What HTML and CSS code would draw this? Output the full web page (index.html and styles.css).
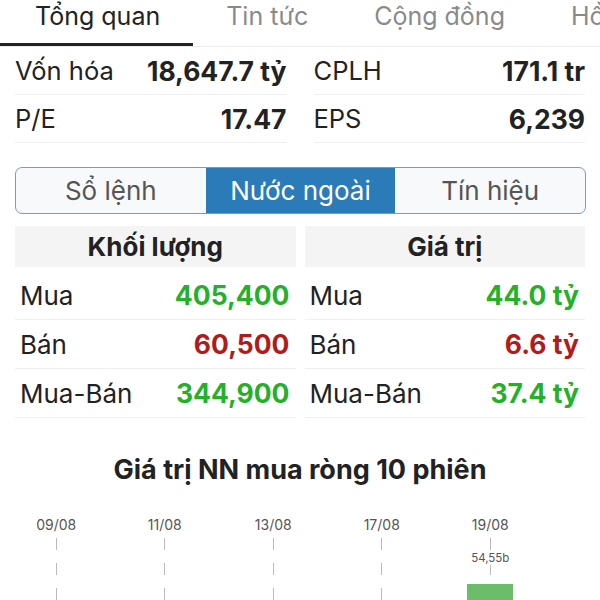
FILE: index.html
```html
<!DOCTYPE html>
<html lang="vi">
  <head>
    <meta charset="utf-8" />
    <meta name="viewport" content="width=device-width, initial-scale=1.0" />
    <title>Tổng quan</title>
    <link rel="stylesheet" href="styles.css">
  </head>

  <body>
    <!-- ______TABS______ -->
    <nav class="tabs">
      <span class="tab aktiv">Tổng quan</span>
      <span class="tab">Tin tức</span>
      <span class="tab">Cộng đồng</span>
      <span class="tab">Hồ sơ</span>
    </nav>

    <!-- ______NØGLETAL______ -->
    <section class="info">
      <div class="raekke"><span>Vốn hóa</span><b>18,647.7 tỷ</b></div>
      <div class="raekke"><span>CPLH</span><b>171.1 tr</b></div>
      <div class="raekke"><span>P/E</span><b>17.47</b></div>
      <div class="raekke"><span>EPS</span><b>6,239</b></div>
    </section>

    <div class="segment">
      <span>Sổ lệnh</span>
      <span class="valgt">Nước ngoài</span>
      <span>Tín hiệu</span>
    </div>

    <!-- ______NƯỚC NGOÀI______ -->
    <section class="flow">
      <div class="kol">
        <h3>Khối lượng</h3>
        <div class="linje"><span>Mua</span><b class="op">405,400</b></div>
        <div class="linje"><span>Bán</span><b class="ned">60,500</b></div>
        <div class="linje"><span>Mua-Bán</span><b class="op">344,900</b></div>
      </div>
      <div class="kol">
        <h3>Giá trị</h3>
        <div class="linje"><span>Mua</span><b class="op">44.0 tỷ</b></div>
        <div class="linje"><span>Bán</span><b class="ned">6.6 tỷ</b></div>
        <div class="linje"><span>Mua-Bán</span><b class="op">37.4 tỷ</b></div>
      </div>
    </section>

    <h2 class="titel">Giá trị NN mua ròng 10 phiên</h2>

    <section class="chart">
      <div class="dag"><p>09/08</p><div class="plot"></div></div>
      <div class="dag"><p>11/08</p><div class="plot"></div></div>
      <div class="dag"><p>13/08</p><div class="plot"></div></div>
      <div class="dag"><p>17/08</p><div class="plot"></div></div>
      <div class="dag">
        <p>19/08</p>
        <div class="plot">
          <span class="vaerdi">54,55b</span>
          <div class="soejle"></div>
        </div>
      </div>
    </section>
  </body>
</html>
```

FILE: styles.css
```css
body {
  margin: 0;
  font-family: Inter, "Noto Sans", sans-serif;
  color: #222;
  background: white;
  overflow: hidden;
}

/*_____TABS_____*/

.tabs {
  display: flex;
  white-space: nowrap;
  overflow: hidden;
  border-bottom: 1px solid #ececec;
}

.tab {
  padding: 0 33px;
  font-size: 25px;
  line-height: 32px;
  height: 43px;
  color: #8a8a8a;
  border-bottom: 3px solid transparent;
}

.tab:first-child {
  padding-left: 35px;
}

.tab.aktiv {
  color: #222;
  border-bottom-color: #222;
}

/*_____INFO_____*/

.info {
  display: grid;
  grid-template-columns: 1fr 1fr;
  column-gap: 27px;
  padding: 0 15px;
}

.raekke {
  display: flex;
  justify-content: space-between;
  align-items: center;
  height: 47px;
  border-bottom: 1px solid #efefef;
  font-size: 25.5px;
}

.raekke b {
  font-size: 26.5px;
}

/*_____SEGMENT_____*/

.segment {
  display: grid;
  grid-template-columns: 1fr 1fr 1fr;
  margin: 24px 14px 0 15px;
  height: 45px;
  border: 1px solid #7c9bba;
  border-radius: 7px;
  overflow: hidden;
  background: #f8f9fa;
}

.segment span {
  display: flex;
  align-items: center;
  justify-content: center;
  font-size: 26px;
  color: #555;
}

.segment .valgt {
  background: #2b7bb8;
  color: white;
}

/*_____FLOW_____*/

.flow {
  display: grid;
  grid-template-columns: 1fr 1fr;
  column-gap: 9px;
  margin: 12px 15px 0;
}

.kol h3 {
  margin: 0 0 4px;
  height: 41px;
  line-height: 41px;
  text-align: center;
  font-size: 26px;
  background: #f4f4f4;
}

.linje {
  display: flex;
  justify-content: space-between;
  align-items: center;
  height: 48px;
  padding: 0 6px 0 5px;
  border-bottom: 1px solid #efefef;
  font-size: 26px;
}

.linje b {
  font-size: 26.5px;
}

.op {
  color: #25b02a;
}

.ned {
  color: #b01b1b;
}

/*_____CHART_____*/

.titel {
  margin: 38px 0 0;
  text-align: center;
  font-size: 27px;
  line-height: 28px;
}

.chart {
  display: grid;
  grid-template-columns: repeat(5, 108.5px);
  margin: 32px 0 0 2px;
}

.dag p {
  margin: 0;
  text-align: center;
  font-size: 14px;
  line-height: 18px;
  color: #555;
}

.plot {
  position: relative;
  height: 70px;
  margin-top: 4px;
  background: repeating-linear-gradient(to bottom, #bbb 0 12px, transparent 12px 25px) no-repeat center top / 1px 100%;
}

.vaerdi {
  position: absolute;
  top: 13px;
  left: 0;
  right: 0;
  text-align: center;
  font-size: 11.5px;
  color: #555;
  background: white;
  line-height: 14px;
}

.soejle {
  position: absolute;
  top: 46px;
  left: 31px;
  width: 46px;
  height: 40px;
  background: #6cbd69;
}
```
